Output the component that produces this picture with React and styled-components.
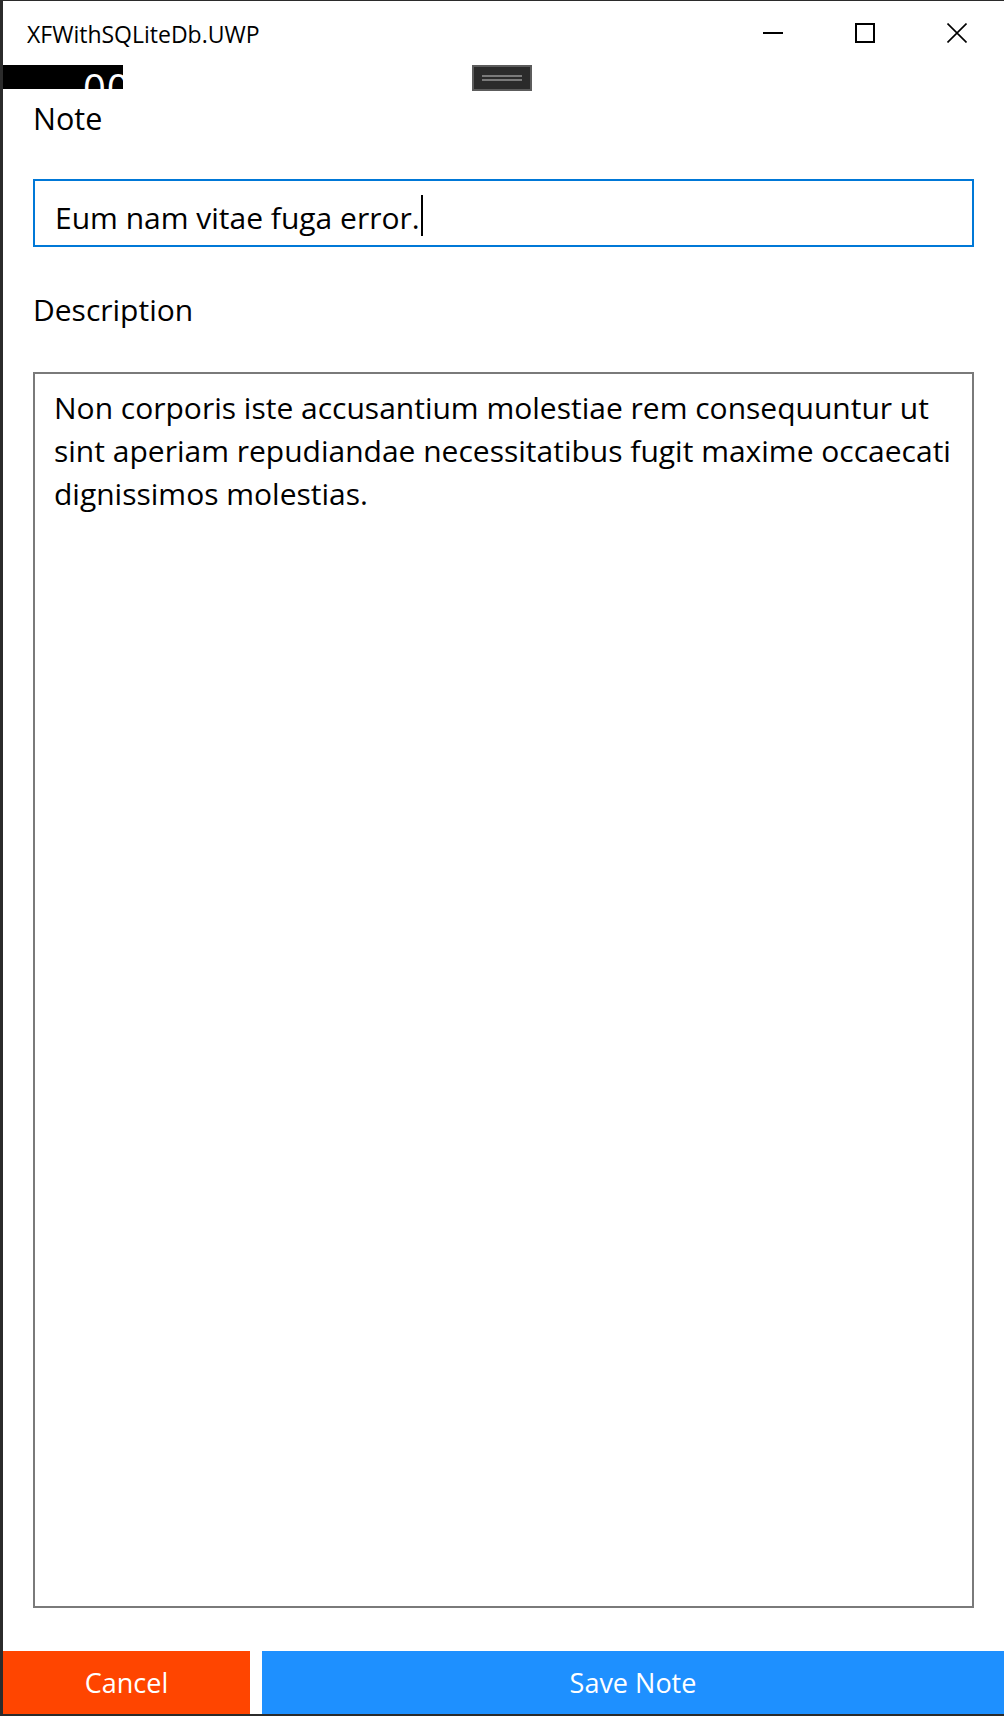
import React from "react";
import styled, { createGlobalStyle } from "styled-components";

const GlobalStyle = createGlobalStyle`
  html, body {
    margin: 0;
    padding: 0;
    background: #2b2b2b;
  }
  body {
    font-family: "Open Sans", "Noto Sans", sans-serif;
    color: #000;
  }
`;

const Desktop = styled.div`
  width: 1004px;
  height: 1716px;
  box-sizing: border-box;
  padding: 1px 0 2px 3px;
  background: #2b2b2b;
`;

const Window = styled.div`
  position: relative;
  height: 100%;
  background: #fff;
  display: flex;
  flex-direction: column;
`;

const TitleBar = styled.div`
  height: 64px;
  flex: none;
  display: flex;
  align-items: center;
`;

const Caption = styled.div`
  flex: 1;
  padding-left: 24px;
  font-size: 23px;
  line-height: 30px;
  margin-top: 1px;
`;

const Controls = styled.div`
  display: flex;
  height: 100%;
  margin-right: 1px;
`;

const ControlButton = styled.div`
  width: 92px;
  height: 100%;
  display: flex;
  align-items: center;
  justify-content: center;
  svg {
    display: block;
  }
`;

// frame-rate counter overlay, glyphs clipped at its bottom edge
const FpsCounter = styled.div`
  position: absolute;
  left: 0;
  top: 64px;
  width: 120px;
  height: 24px;
  background: #000;
  overflow: hidden;
  span {
    position: absolute;
    left: 80px;
    top: 15px;
    color: #fff;
    font-size: 40px;
    line-height: 16px;
    letter-spacing: 1px;
  }
`;

const DebugHandle = styled.div`
  position: absolute;
  left: 469px;
  top: 64px;
  width: 60px;
  height: 26px;
  box-sizing: border-box;
  border: 2px solid #5c5c5c;
  background: #2b2b2b;
  display: flex;
  flex-direction: column;
  justify-content: center;
  align-items: center;
  gap: 2px;
  i {
    display: block;
    width: 40px;
    height: 2px;
    background: #7a7a7a;
  }
`;

const Form = styled.div`
  flex: 1;
  display: flex;
  flex-direction: column;
  padding: 33px 30px 0 30px;
`;

const FieldLabel = styled.div`
  font-size: ${(p) => p.$size}px;
  line-height: 40px;
  margin-bottom: ${(p) => p.$gap}px;
`;

const Entry = styled.div`
  height: 68px;
  box-sizing: border-box;
  border: 2px solid #0078d7;
  padding: 14px 0 0 20px;
  font-size: 30px;
  line-height: 40px;
  white-space: nowrap;
  margin-bottom: 43px;
`;

const Caret = styled.span`
  display: inline-block;
  width: 2px;
  height: 41px;
  background: #000;
  vertical-align: -7px;
  margin-left: 1px;
`;

const Editor = styled.div`
  height: 1236px;
  box-sizing: border-box;
  border: 2px solid #7a7a7a;
  padding: 12px 0 0 19px;
  font-size: 30px;
  line-height: 43px;
`;

const EditorLine = styled.span`
  display: block;
  white-space: nowrap;
`;

const ButtonRow = styled.div`
  margin-top: 43px;
  height: 63px;
  flex: none;
  display: grid;
  grid-template-columns: 247px 1fr;
  gap: 12px;
`;

const ActionButton = styled.div`
  background: ${(p) => p.$bg};
  color: #fff;
  display: flex;
  align-items: center;
  justify-content: center;
  font-size: 27px;
`;

export default function App() {
  return (
    <>
      <GlobalStyle />
      <Desktop>
        <Window>
          <TitleBar>
            <Caption>XFWithSQLiteDb.UWP</Caption>
            <Controls>
              <ControlButton>
                <svg width="20" height="20" viewBox="0 0 20 20">
                  <rect x="0" y="9" width="20" height="2" fill="#000" />
                </svg>
              </ControlButton>
              <ControlButton>
                <svg width="20" height="20" viewBox="0 0 20 20">
                  <rect x="1" y="1" width="18" height="18" fill="none" stroke="#000" strokeWidth="2" />
                </svg>
              </ControlButton>
              <ControlButton>
                <svg width="20" height="20" viewBox="0 0 20 20">
                  <path d="M0.5 0.5 L19.5 19.5 M19.5 0.5 L0.5 19.5" stroke="#000" strokeWidth="1.6" />
                </svg>
              </ControlButton>
            </Controls>
          </TitleBar>

          <Form>
            <FieldLabel $size={30.5} $gap={41}>Note</FieldLabel>
            <Entry>
              Eum nam vitae fuga error.
              <Caret />
            </Entry>
            <FieldLabel $size={30} $gap={42}>Description</FieldLabel>
            <Editor>
              <EditorLine>Non corporis iste accusantium molestiae rem consequuntur ut</EditorLine>
              <EditorLine>sint aperiam repudiandae necessitatibus fugit maxime occaecati</EditorLine>
              <EditorLine>dignissimos molestias.</EditorLine>
            </Editor>
          </Form>

          <ButtonRow>
            <ActionButton $bg="#ff4500">Cancel</ActionButton>
            <ActionButton $bg="#1e90ff">Save Note</ActionButton>
          </ButtonRow>

          <FpsCounter>
            <span>00</span>
          </FpsCounter>
          <DebugHandle>
            <i />
            <i />
          </DebugHandle>
        </Window>
      </Desktop>
    </>
  );
}
